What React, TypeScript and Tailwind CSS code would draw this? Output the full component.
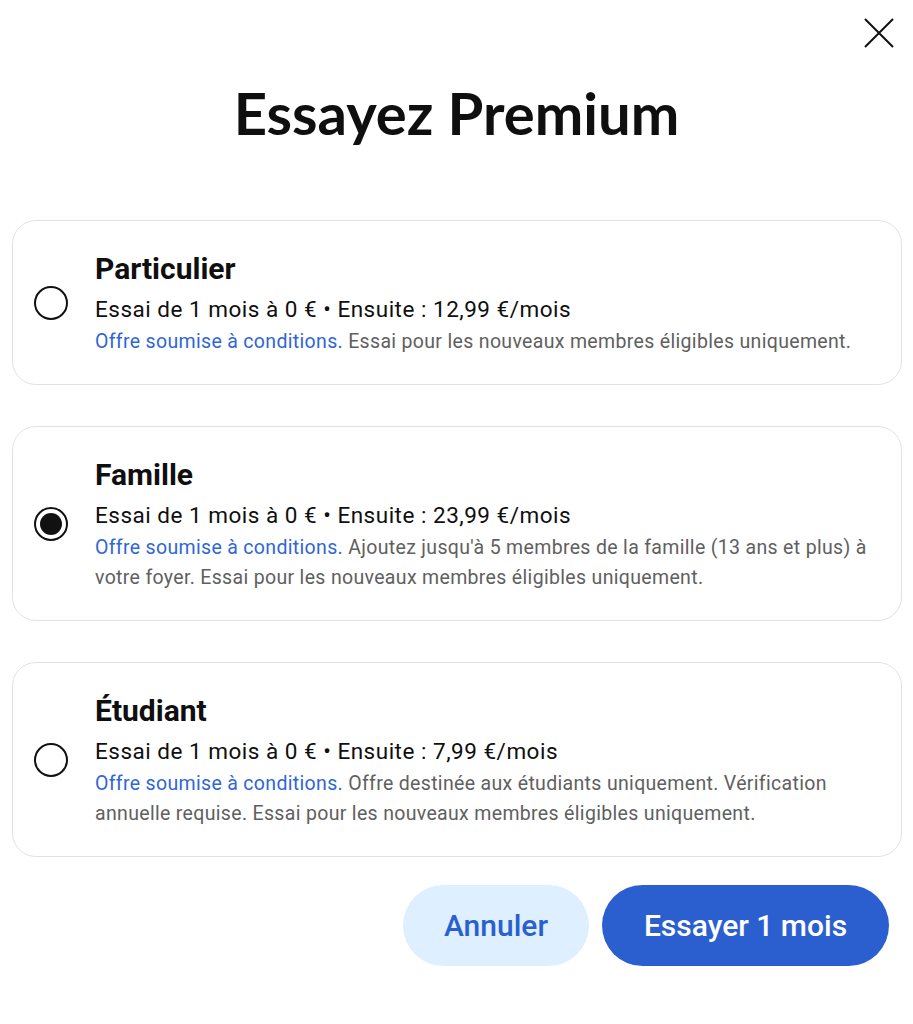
import React from "react";

const plans = [
  {
    name: "Particulier",
    price: "Essai de 1 mois à 0 € • Ensuite : 12,99 €/mois",
    desc: "Essai pour les nouveaux membres éligibles uniquement.",
    selected: false,
  },
  {
    name: "Famille",
    price: "Essai de 1 mois à 0 € • Ensuite : 23,99 €/mois",
    desc: "Ajoutez jusqu'à 5 membres de la famille (13 ans et plus) à votre foyer. Essai pour les nouveaux membres éligibles uniquement.",
    selected: true,
  },
  {
    name: "Étudiant",
    price: "Essai de 1 mois à 0 € • Ensuite : 7,99 €/mois",
    desc: "Offre destinée aux étudiants uniquement. Vérification annuelle requise. Essai pour les nouveaux membres éligibles uniquement.",
    selected: false,
  },
];

function Radio({ selected }: { selected: boolean }) {
  return (
    <div className="w-[34px] h-[34px] shrink-0 rounded-full border-2 border-[#111] flex items-center justify-center">
      {selected && <div className="w-[22px] h-[22px] rounded-full bg-[#111]" />}
    </div>
  );
}

export default function App() {
  return (
    <div
      className="relative w-[913px] h-[1024px] bg-white text-[#0f0f0f]"
      style={{ fontFamily: "Roboto, 'Noto Sans', sans-serif" }}
    >
      <button className="absolute left-[864px] top-[18px] w-[30px] h-[30px]" aria-label="Fermer">
        <svg viewBox="0 0 30 30" className="w-[30px] h-[30px]">
          <path d="M1 1 L29 29 M29 1 L1 29" stroke="#111" strokeWidth="2" fill="none" />
        </svg>
      </button>
      <div className="pt-[81px] px-[12px] flex flex-col">
        <h1
          className="text-center text-[58px] leading-[64px] font-bold text-[#0f0f0f]"
          style={{ fontFamily: "Lato, 'Open Sans', sans-serif" }}
        >
          Essayez Premium
        </h1>
        <div className="mt-[75px] flex flex-col gap-[41px] w-[890px]">
          {plans.map((p) => (
            <div
              key={p.name}
              className="flex items-center rounded-[24px] border border-[#e2e2e2] pl-[21px] pr-[22px] pt-[28px] pb-[27px]"
            >
              <Radio selected={p.selected} />
              <div className="ml-[27px] flex flex-col">
                <div className="text-[30px] leading-[40px] font-bold">{p.name}</div>
                <div className="mt-[5px] text-[22.5px] leading-[30px] tracking-[0.5px]">{p.price}</div>
                <div className="mt-[3px] text-[19.5px] leading-[30px] tracking-[0.33px] text-[#606060]">
                  <span className="text-[#2f66d8]">Offre soumise à conditions.</span> {p.desc}
                </div>
              </div>
            </div>
          ))}
        </div>
        <div className="mt-[28px] flex justify-end gap-[13px] pr-[12px]">
          <button className="w-[186px] h-[81px] rounded-full bg-[#def0ff] text-[#2b5fcf] text-[30px] font-medium">
            Annuler
          </button>
          <button className="w-[287px] h-[81px] rounded-full bg-[#2b5fcf] text-white text-[30px] font-medium">
            Essayer 1 mois
          </button>
        </div>
      </div>
    </div>
  );
}
